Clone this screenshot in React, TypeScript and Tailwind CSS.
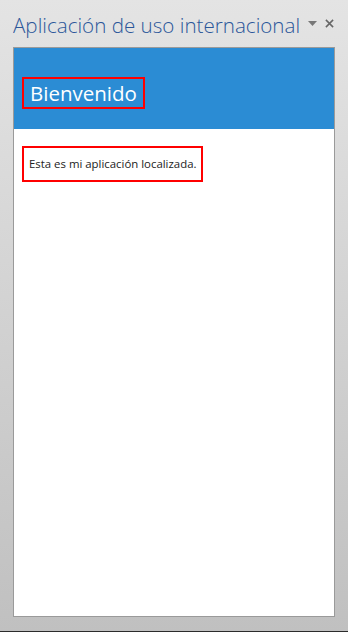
import React from 'react';

export default function App() {
  return (
    <div
      className="flex h-[632px] w-[348px] flex-col bg-gradient-to-b from-[#e4e4e4] to-[#c0c0c0]"
      style={{ fontFamily: '"Segoe UI", "Open Sans", sans-serif' }}
    >
      {/* Task pane title */}
      <div className="flex h-[47px] items-start pl-[13px] pr-[14px] pt-[11px]">
        <h1 className="flex-1 truncate text-[20.6px] font-light leading-[28px] text-[#2b579a]">
          Aplicación de uso internacional
        </h1>
        <div className="flex items-center gap-[8px] pt-[8px]">
          <svg width="9" height="5" viewBox="0 0 9 5">
            <path d="M0 0h9L4.5 5z" fill="#777" />
          </svg>
          <svg width="9" height="9" viewBox="0 0 10 10">
            <path d="M1 1l8 8M9 1l-8 8" stroke="#666" strokeWidth="1.7" />
          </svg>
        </div>
      </div>

      {/* Add-in content */}
      <div className="mx-[13px] flex h-[570px] flex-col border border-[#9a9a9a] bg-white">
        <div className="flex h-[81px] items-end bg-[#2b8cd4] pb-[20px] pl-[8px]">
          <div className="border-2 border-[#ff0000] px-[6px] py-[1px]">
            <h2 className="text-[20.5px] font-normal leading-[26px] text-white">Bienvenido</h2>
          </div>
        </div>
        <div className="pl-[8px] pt-[17px]">
          <div className="inline-block border-2 border-[#ff0000] px-[5px] py-[8px]">
            <p className="text-[11.4px] leading-[16px] text-[#222]">Esta es mi aplicación localizada.</p>
          </div>
        </div>
      </div>

      <div className="flex-1" />
      <div className="h-px bg-[#2b2b2b]" />
    </div>
  );
}
